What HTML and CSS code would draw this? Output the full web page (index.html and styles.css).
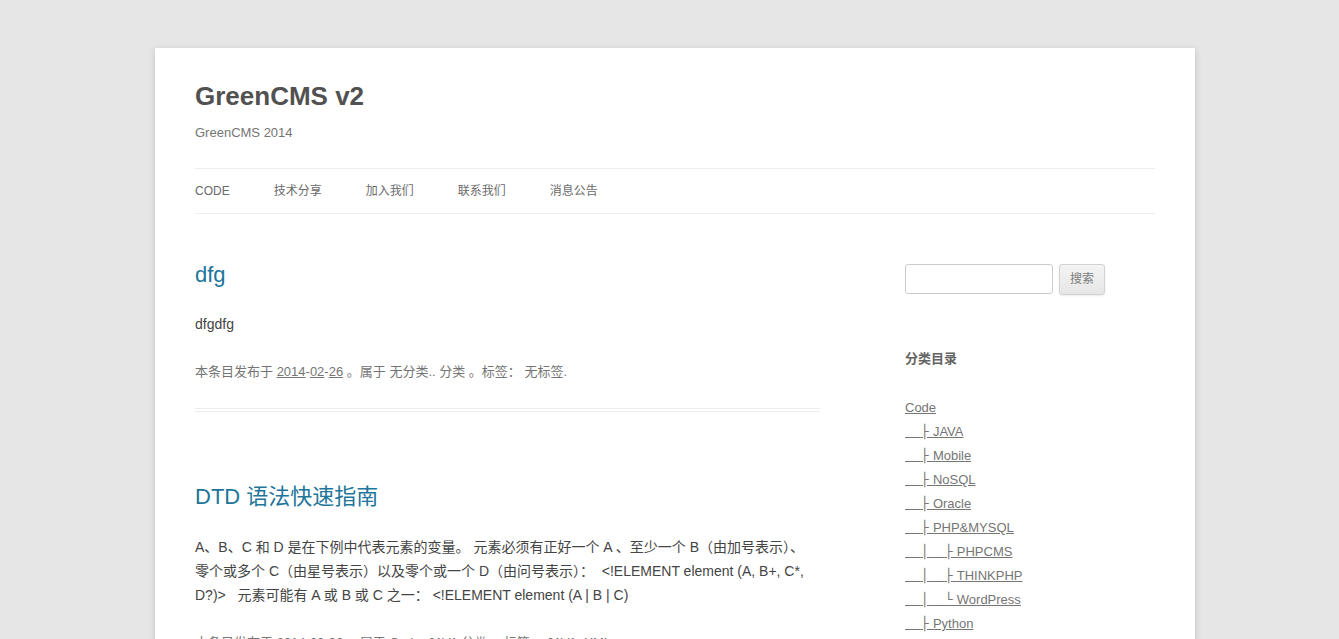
FILE: index.html
```html
<!DOCTYPE html>
<html lang="zh-CN">
<head>
<meta charset="utf-8">
<title>GreenCMS v2</title>
<link rel="stylesheet" href="styles.css">
</head>
<body>
<div class="page">
  <header class="site-header">
    <h1 class="site-title"><a href="#">GreenCMS v2</a></h1>
    <h2 class="site-desc">GreenCMS 2014</h2>
    <nav class="main-nav">
      <ul class="nav-menu">
        <li><a href="#">CODE</a></li>
        <li><a href="#">技术分享</a></li>
        <li><a href="#">加入我们</a></li>
        <li><a href="#">联系我们</a></li>
        <li><a href="#">消息公告</a></li>
      </ul>
    </nav>
  </header>

  <div class="main">
    <div class="content">
      <article class="post">
        <h1 class="entry-title"><a href="#">dfg</a></h1>
        <div class="entry-content"><p>dfgdfg</p></div>
        <footer class="entry-meta">本条目发布于 <a href="#">2014</a>-<a href="#">02</a>-<a href="#">26</a> 。属于 无分类.. 分类 。标签： 无标签.</footer>
      </article>

      <article class="post">
        <h1 class="entry-title"><a href="#">DTD 语法快速指南</a></h1>
        <div class="entry-content"><p>A、B、C 和 D 是在下例中代表元素的变量。 元素必须有正好一个 A 、至少一个 B（由加号表示）、零个或多个 C（由星号表示）以及零个或一个 D（由问号表示）： &nbsp;&lt;!ELEMENT element (A, B+, C*, D?)&gt; &nbsp; 元素可能有 A 或 B 或 C 之一： &lt;!ELEMENT element (A | B | C)</p></div>
        <footer class="entry-meta">本条目发布于 <a href="#">2014</a>-<a href="#">02</a>-<a href="#">26</a> 。属于 <a href="#">Code</a>, <a href="#">JAVA</a> 分类 。标签： <a href="#">JAVA</a>, <a href="#">XML</a>.</footer>
      </article>
    </div>

    <aside class="sidebar">
      <div class="widget widget-search">
        <form class="search-form">
          <input class="search-input" type="text">
          <button class="search-btn" type="button">搜索</button>
        </form>
      </div>
      <div class="widget widget-cats">
        <h3 class="widget-title">分类目录</h3>
        <ul class="cat-list">
          <li><a href="#">Code</a></li>
          <li><a href="#"><span class="sp">&nbsp;&nbsp;&nbsp;&nbsp;&nbsp;</span><span class="tr">├</span>JAVA</a></li>
          <li><a href="#"><span class="sp">&nbsp;&nbsp;&nbsp;&nbsp;&nbsp;</span><span class="tr">├</span>Mobile</a></li>
          <li><a href="#"><span class="sp">&nbsp;&nbsp;&nbsp;&nbsp;&nbsp;</span><span class="tr">├</span>NoSQL</a></li>
          <li><a href="#"><span class="sp">&nbsp;&nbsp;&nbsp;&nbsp;&nbsp;</span><span class="tr">├</span>Oracle</a></li>
          <li><a href="#"><span class="sp">&nbsp;&nbsp;&nbsp;&nbsp;&nbsp;</span><span class="tr">├</span>PHP&amp;MYSQL</a></li>
          <li><a href="#"><span class="sp">&nbsp;&nbsp;&nbsp;&nbsp;&nbsp;</span><span class="vl">│</span><span class="sp">&nbsp;&nbsp;&nbsp;&nbsp;&nbsp;</span><span class="tr">├</span>PHPCMS</a></li>
          <li><a href="#"><span class="sp">&nbsp;&nbsp;&nbsp;&nbsp;&nbsp;</span><span class="vl">│</span><span class="sp">&nbsp;&nbsp;&nbsp;&nbsp;&nbsp;</span><span class="tr">├</span>THINKPHP</a></li>
          <li><a href="#"><span class="sp">&nbsp;&nbsp;&nbsp;&nbsp;&nbsp;</span><span class="vl">│</span><span class="sp">&nbsp;&nbsp;&nbsp;&nbsp;&nbsp;</span><span class="tr">└</span>WordPress</a></li>
          <li><a href="#"><span class="sp">&nbsp;&nbsp;&nbsp;&nbsp;&nbsp;</span><span class="tr">├</span>Python</a></li>
          <li><a href="#"><span class="sp">&nbsp;&nbsp;&nbsp;&nbsp;&nbsp;</span><span class="tr">├</span>Web</a></li>
          <li><a href="#"><span class="sp">&nbsp;&nbsp;&nbsp;&nbsp;&nbsp;</span><span class="tr">└</span>XML</a></li>
        </ul>
      </div>
    </aside>
  </div>
</div>
</body>
</html>
```

FILE: styles.css
```css
* { box-sizing: border-box; }

html, body { margin: 0; padding: 0; }

body {
  background: #e6e6e6;
  color: #444;
  font-family: "Liberation Sans", Arial, "Noto Sans CJK SC", sans-serif;
  font-size: 14px;
  line-height: 24px;
  padding-left: 11px;
}

a { color: #21759b; }

.page {
  width: 1040px;
  margin: 48px auto 0;
  padding: 0 40px 48px;
  background: #fff;
  box-shadow: 0 2px 6px rgba(100, 100, 100, 0.3);
  min-height: 800px;
}

.site-header { padding: 24px 0 0; }

.site-title {
  margin: 0;
  font-size: 26px;
  font-weight: bold;
  line-height: 48px;
}
.site-title a { color: #515151; text-decoration: none; }

.site-desc {
  margin: 0;
  padding-top: 1px;
  font-size: 13px;
  font-weight: normal;
  line-height: 23px;
  color: #757575;
}

.main-nav { margin-top: 24px; }

.nav-menu {
  display: flex;
  margin: 0;
  padding: 1px 0 0;
  list-style: none;
  border-top: 1px solid #ededed;
  border-bottom: 1px solid #ededed;
}
.nav-menu li { margin-right: 44px; font-size: 12px; line-height: 43px; }
.nav-menu a { color: #6a6a6a; text-decoration: none; }

.main {
  display: flex;
  justify-content: space-between;
  margin-top: 48px;
}

.content { width: 625px; }

.post {
  padding-bottom: 24px;
  margin-bottom: 72px;
  border-bottom: 4px double #ededed;
}

.entry-title {
  margin: 0 0 24px;
  font-size: 22px;
  font-weight: normal;
  line-height: 26.4px;
}
.entry-title a { color: #21759b; text-decoration: none; }

.entry-content { width: 614px; }
.entry-content p { margin: 0 0 24px; }

.entry-meta {
  font-size: 13px;
  line-height: 24px;
  color: #757575;
}
.entry-meta a { color: #757575; }

.sidebar { width: 250px; padding-top: 2px; }

.widget-search { margin-bottom: 52px; }

.search-form { display: flex; gap: 6px; align-items: flex-start; }

.search-input {
  width: 148px;
  height: 30px;
  padding: 6px;
  border: 1px solid #ccc;
  border-radius: 3px;
  font: 14px "Liberation Sans", Arial, sans-serif;
  background: #fff;
}

.search-btn {
  height: 31px;
  padding: 6px 10px;
  font: 12px/17px "Liberation Sans", Arial, "Noto Sans CJK SC", sans-serif;
  color: #7c7c7c;
  background: linear-gradient(#f4f4f4, #e6e6e6);
  border: 1px solid #d2d2d2;
  border-radius: 3px;
  box-shadow: 0 1px 2px rgba(64, 64, 64, 0.1);
}

.widget-title {
  margin: 0 0 25px;
  font-size: 13px;
  font-weight: bold;
  line-height: 24px;
  color: #636363;
}

.cat-list { margin: 0; padding: 0; list-style: none; }
.cat-list li { font-size: 13px; line-height: 24px; }
.cat-list a { color: #757575; }

.sp { letter-spacing: -0.4px; }
.tr { font-family: "DejaVu Sans", sans-serif; letter-spacing: 4px; }
.vl { font-family: "DejaVu Sans", sans-serif; }
```
